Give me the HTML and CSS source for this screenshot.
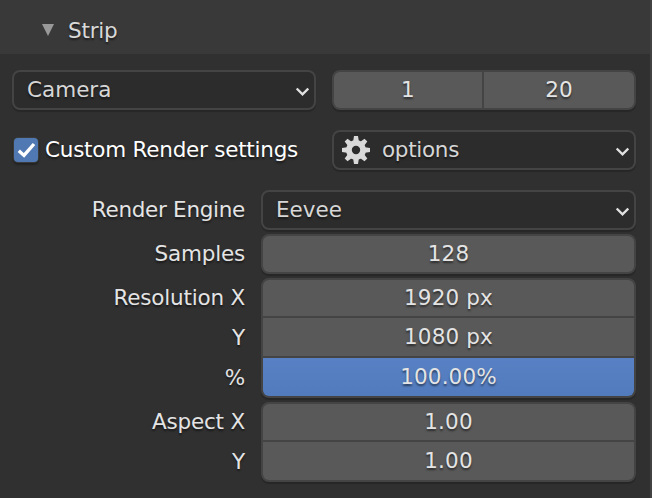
FILE: index.html
```html
<!DOCTYPE html>
<html lang="en">
<head>
<meta charset="utf-8">
<title>Strip</title>
<link rel="stylesheet" href="styles.css">
</head>
<body>
<main class="panel">
  <header class="panel-header">
    <svg class="disclosure" width="12" height="12" viewBox="0 0 12 12"><path d="M0 0H12L6 12Z"/></svg>
    <span class="title">Strip</span>
  </header>
  <section class="panel-body">
    <div class="row split">
      <div class="field menu"><span class="menu-label">Camera</span><svg class="chevron" width="14" height="10" viewBox="0 0 14 10"><path d="M1.7 1.5L7.5 7.3L13.3 1.5"/></svg></div>
      <div class="group pair"><div class="value">1</div><div class="value">20</div></div>
    </div>
    <div class="row split options-row">
      <div class="check-row">
        <span class="checkbox"><svg width="24" height="24" viewBox="0 0 24 24"><path d="M4.8 12.8L10 17.4L20 6"/></svg></span>
        <span>Custom Render settings</span>
      </div>
      <div class="field menu with-icon">
        <svg class="gear" width="28" height="28" viewBox="-14 -14 28 28">
          <g>
            <path d="M-2-14H2L2.8-9H-2.8ZM-2 14H2L2.8 9H-2.8ZM-14-2V2L-9 2.8V-2.8ZM14-2V2L9 2.8V-2.8Z"/>
            <path transform="rotate(45)" d="M-2-14H2L2.8-9H-2.8ZM-2 14H2L2.8 9H-2.8ZM-14-2V2L-9 2.8V-2.8ZM14-2V2L9 2.8V-2.8Z"/>
            <path fill-rule="evenodd" d="M0-10A10 10 0 1 1 0 10A10 10 0 1 1 0-10ZM0-4.2A4.2 4.2 0 1 0 0 4.2A4.2 4.2 0 1 0 0-4.2Z"/>
          </g>
        </svg>
        <span class="menu-label">options</span><svg class="chevron" width="14" height="10" viewBox="0 0 14 10"><path d="M1.7 1.5L7.5 7.3L13.3 1.5"/></svg>
      </div>
    </div>
    <div class="properties">
      <div class="property">
        <div class="labels"><span>Render Engine</span></div>
        <div class="field menu"><span class="menu-label">Eevee</span><svg class="chevron" width="14" height="10" viewBox="0 0 14 10"><path d="M1.7 1.5L7.5 7.3L13.3 1.5"/></svg></div>
      </div>
      <div class="property">
        <div class="labels"><span>Samples</span></div>
        <div class="group"><div class="value">128</div></div>
      </div>
      <div class="property">
        <div class="labels"><span>Resolution X</span><span>Y</span><span>%</span></div>
        <div class="group"><div class="value">1920 px</div><div class="value">1080 px</div><div class="value slider">100.00%</div></div>
      </div>
      <div class="property">
        <div class="labels"><span>Aspect X</span><span>Y</span></div>
        <div class="group"><div class="value">1.00</div><div class="value">1.00</div></div>
      </div>
    </div>
  </section>
</main>
</body>
</html>
```
FILE: styles.css
```css
* { box-sizing: border-box; }

body {
  margin: 0;
  background: #303030;
  color: #e4e4e4;
  font: 21.5px/36px "DejaVu Sans", sans-serif;
  text-shadow: 0 2px 2px rgba(0, 0, 0, 0.5);
}

.panel {
  height: 498px;
  border-right: 2px solid #424242;
  overflow: hidden;
}

.panel-header {
  display: flex;
  align-items: center;
  height: 54px;
  padding: 6px 0 0 42px;
  gap: 14px;
  background: #393939;
}

.title {
  padding-top: 2px;
  color: #d9d9d9;
  letter-spacing: -0.2px;
}

.disclosure { fill: #999; }

.panel-body { padding: 16px 14px 0 12px; }

.split {
  display: grid;
  grid-template-columns: 304px 304px;
  gap: 16px;
  height: 40px;
}

.options-row { margin-top: 20px; }

.field, .group {
  border: 2px solid #444;
  border-radius: 8px;
  box-shadow: 0 2px 1px rgba(0, 0, 0, 0.2);
}

.menu {
  display: flex;
  align-items: center;
  height: 40px;
  padding: 0 4px 0 13px;
  background: #2c2c2c;
  color: #d6d6d6;
}

.menu-label { flex: 1; }

.with-icon {
  padding-left: 8px;
  gap: 12px;
}

.with-icon .menu-label { letter-spacing: -0.3px; }

.chevron {
  margin: 3px 1px 0 0;
  fill: none;
  stroke: #e0e0e0;
  stroke-width: 2.4;
}

.gear { fill: #d9d9d9; }

.group {
  display: flex;
  flex-direction: column;
  gap: 2px;
  background: #444;
}

.value {
  height: 38px;
  line-height: 38px;
  background: #595959;
  text-align: center;
  letter-spacing: 0.15px;
}

.group .value:first-child {
  height: 36px;
  line-height: 36px;
  border-radius: 6px 6px 0 0;
}

.group .value:last-child { border-radius: 0 0 6px 6px; }
.group .value:only-child { border-radius: 6px; }

.pair {
  display: grid;
  grid-template-columns: 148px 150px;
}

.pair .value {
  height: 36px;
  line-height: 36px;
}

.group.pair .value:first-child { border-radius: 6px 0 0 6px; }
.group.pair .value:last-child { border-radius: 0 6px 6px 0; }

.group .slider { background: linear-gradient(#5781c4, #527bbd); }

.check-row {
  display: flex;
  align-items: center;
  gap: 7px;
  padding-left: 2px;
  color: #fff;
  letter-spacing: -0.24px;
  white-space: nowrap;
}

.checkbox {
  width: 24px;
  height: 24px;
  border-radius: 4px;
  background: #5078b3;
  box-shadow: 0 0 0 1px #3b3b3b, 0 2px 2px 1px rgba(0, 0, 0, 0.3);
}

.checkbox svg {
  display: block;
  fill: none;
  stroke: #fff;
  stroke-width: 3.4;
}

.properties {
  display: flex;
  flex-direction: column;
  gap: 4px;
  margin-top: 20px;
}

.property {
  display: grid;
  grid-template-columns: 233px 375px;
  column-gap: 16px;
}

.property:nth-child(2) { height: 40px; }
.property:nth-child(3) { height: 120px; }
.property:nth-child(4) { height: 80px; }

.labels {
  display: flex;
  flex-direction: column;
  text-align: right;
  letter-spacing: -0.2px;
}

.property:first-child .labels { letter-spacing: -0.3px; }

.labels span {
  flex: 1;
  line-height: 40px;
}
```
